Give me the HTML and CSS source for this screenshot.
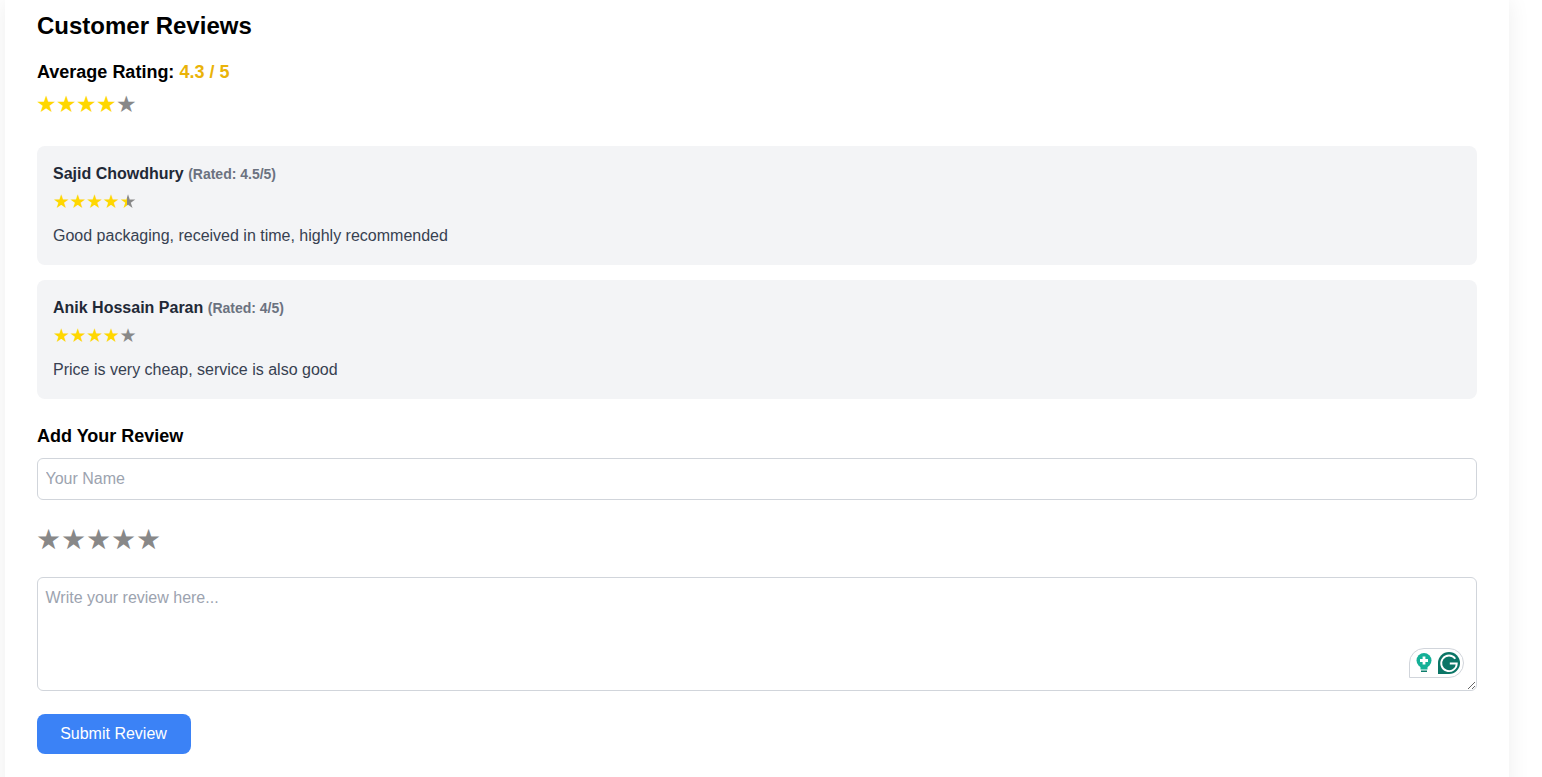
FILE: index.html
```html
<!DOCTYPE html>
<html lang="en">
<head>
    <meta charset="UTF-8">
    <meta name="viewport" content="width=device-width, initial-scale=1.0">
    <title>Customer Reviews</title>
    <link rel="stylesheet" href="styles.css">
</head>
<body>
    <div class="panel">
        <h2 class="section-title">Customer Reviews</h2>
        <p class="average">Average Rating: <span class="average-value">4.3 / 5</span></p>
        <div class="stars stars-avg"><span class="on">★</span><span class="on">★</span><span class="on">★</span><span class="on">★</span><span>★</span></div>

        <div class="review-list">
            <div class="review">
                <div class="review-name">Sajid Chowdhury <span class="review-rated">(Rated: 4.5/5)</span></div>
                <div class="stars stars-small"><span class="on">★</span><span class="on">★</span><span class="on">★</span><span class="on">★</span><span class="half">★</span></div>
                <p class="review-text">Good packaging, received in time, highly recommended</p>
            </div>
            <div class="review">
                <div class="review-name">Anik Hossain Paran <span class="review-rated">(Rated: 4/5)</span></div>
                <div class="stars stars-small"><span class="on">★</span><span class="on">★</span><span class="on">★</span><span class="on">★</span><span>★</span></div>
                <p class="review-text">Price is very cheap, service is also good</p>
            </div>
        </div>

        <h3 class="form-title">Add Your Review</h3>
        <input type="text" class="field field-name" placeholder="Your Name">
        <div class="stars stars-big"><span>★</span><span>★</span><span>★</span><span>★</span><span>★</span></div>
        <div class="textarea-wrap">
            <textarea class="field field-text" placeholder="Write your review here..."></textarea>
            <div class="grammarly">
                <svg width="20" height="22" viewBox="0 0 20 22">
                    <circle cx="10" cy="8.5" r="7.5" fill="#15b097"/>
                    <path d="M6.5 14h7v3.5h-7z" fill="#15b097"/>
                    <path d="M7 18.5h6v1.5h-6z" fill="#0c7d6c"/>
                    <path d="M8.6 4.5h2.8v2.6H14v2.8h-2.6v2.6H8.6V9.900H6V7.100h2.600z" fill="#fff"/>
                </svg>
                <svg width="24" height="24" viewBox="0 0 24 24">
                    <path d="M12 1a11 11 0 0 1 0 22H1V12A11 11 0 0 1 12 1z" fill="#0b7566"/>
                    <path d="M18.300 7.700A7.800 7.800 0 1 0 19.800 12.500h-7" fill="none" stroke="#fff" stroke-width="1.800"/>
                </svg>
            </div>
        </div>
        <button class="submit-button">Submit Review</button>
    </div>
</body>
</html>
```

FILE: styles.css
```css
html, body {
    height: 100%;
}

body {
    margin: 0;
    background: #fff;
    font-family: "Liberation Sans", Arial, sans-serif;
    color: #000;
    overflow: hidden;
}

/* main white panel */
.panel {
    width: 1440px;
    margin-left: 5px;
    padding: 12px 32px 40px;
    background: #fff;
    box-shadow: 0 0 22px rgba(0, 0, 0, 0.07);
}

.section-title {
    margin: 0 0 18px;
    font-size: 24px;
    line-height: 28px;
    font-weight: 700;
}

.average {
    margin: 0 0 4px;
    font-size: 18px;
    line-height: 28px;
    font-weight: 700;
}

.average-value {
    color: #eab308;
}

/* rating stars */
.stars {
    display: flex;
    font-family: "DejaVu Sans", sans-serif;
    color: #888;
}

.stars span {
    display: block;
}

.stars .on {
    color: #ffd700;
}

.stars .half {
    background: linear-gradient(90deg, #ffd700 50%, #888 50%);
    -webkit-background-clip: text;
    background-clip: text;
    color: transparent;
}

.stars-avg {
    font-size: 23px;
    line-height: 28px;
    margin: 0 0 28px -1px;
}

.stars-avg span {
    width: 20px;
}

.stars-small {
    font-size: 19px;
    line-height: 24px;
    margin-bottom: 11px;
}

.stars-small span {
    width: 16.6px;
}

.stars-big {
    font-size: 28px;
    line-height: 36px;
    margin: 22px 0 19px -1px;
}

.stars-big span {
    width: 25px;
}

/* review cards */
.review-list {
    display: flex;
    flex-direction: column;
    gap: 15px;
}

.review {
    background: #f3f4f6;
    border-radius: 8px;
    padding: 16px;
    height: 119px;
    box-sizing: border-box;
}

.review-name {
    font-size: 16px;
    line-height: 24px;
    font-weight: 700;
    color: #1f2937;
    margin-bottom: 3px;
}

.review-rated {
    font-size: 14px;
    color: #6b7280;
}

.review-text {
    margin: 0;
    font-size: 16px;
    line-height: 24px;
    color: #374151;
}

/* add review form */
.form-title {
    margin: 25px 0 10px;
    font-size: 18px;
    line-height: 24px;
    font-weight: 700;
}

.field {
    display: block;
    box-sizing: border-box;
    width: 100%;
    border: 1px solid #d1d5db;
    border-radius: 6px;
    padding: 8px 8px 8px 7.500px;
    font-family: inherit;
    font-size: 16px;
    line-height: 24px;
    color: #111827;
    background: #fff;
    outline: none;
}

.field::placeholder {
    color: #9ca3af;
}

.field-name {
    height: 42px;
}

.field-text {
    height: 114px;
}

.textarea-wrap {
    position: relative;
    margin-bottom: 23px;
}

/* grammarly widget sitting over the textarea */
.grammarly {
    position: absolute;
    right: 13px;
    bottom: 13px;
    box-sizing: border-box;
    width: 55px;
    height: 30px;
    display: flex;
    align-items: center;
    justify-content: space-between;
    padding: 0 2px 0 4px;
    background: #fff;
    border: 1px solid #d1d5db;
    border-radius: 15px 15px 15px 0;
}

.submit-button {
    display: block;
    width: 154px;
    height: 40px;
    padding: 0 1px 0 0;
    border: none;
    border-radius: 8px;
    background: #3b82f6;
    color: #fff;
    font-family: inherit;
    font-size: 16px;
}
```
